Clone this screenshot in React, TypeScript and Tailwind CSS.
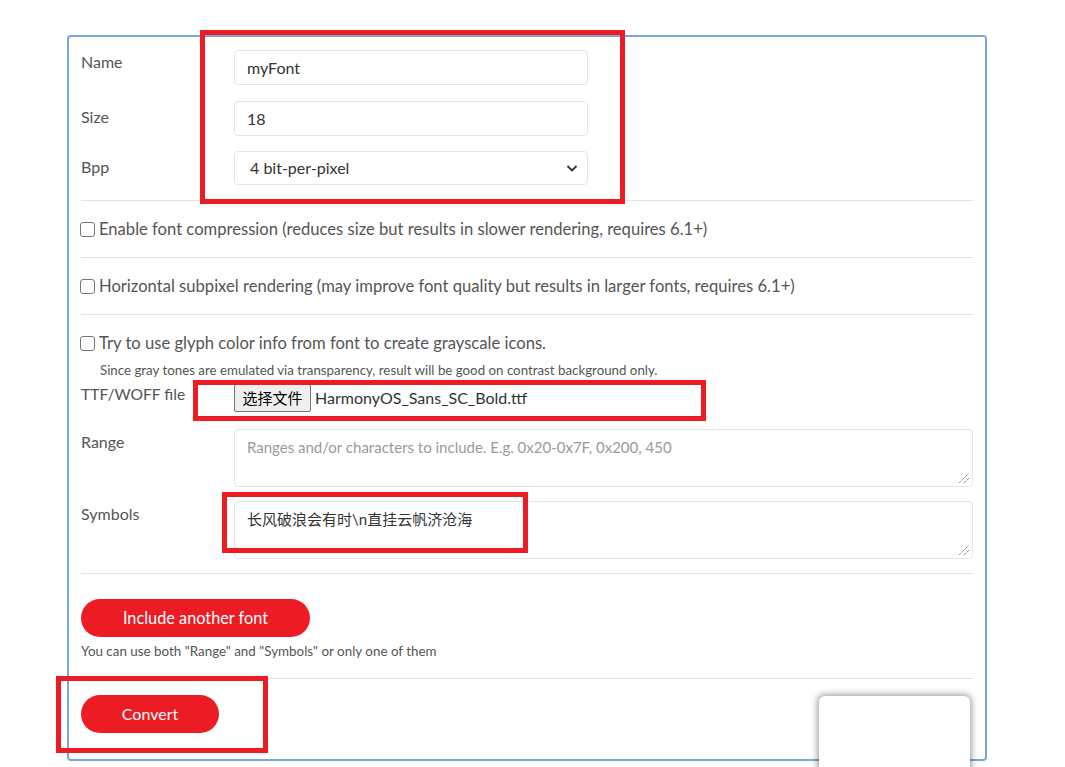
import React from "react";

const font = { fontFamily: "Lato, 'Noto Sans CJK SC', sans-serif" };

function ResizeHandle() {
  return (
    <svg className="absolute right-[2px] bottom-[2px]" width="12" height="12" viewBox="0 0 12 12">
      <line x1="1" y1="11" x2="11" y2="1" stroke="#555" strokeWidth="1" strokeDasharray="1 1" />
      <line x1="6" y1="11" x2="11" y2="6" stroke="#555" strokeWidth="1" strokeDasharray="1 1" />
    </svg>
  );
}

function Divider({ className = "" }: { className?: string }) {
  return <div className={"h-px bg-[#e3e3e3] " + className} />;
}

function Check({ label }: { label: string }) {
  return (
    <div className="flex items-center h-[24px]">
      <span className="w-[15px] h-[15px] border border-[#767676] rounded-[3px] ml-[-1px] mr-[4px] bg-white" />
      <span className="text-[16.6px] text-[#555] leading-[24px] whitespace-nowrap">{label}</span>
    </div>
  );
}

export default function App() {
  return (
    <div className="relative w-[1065px] h-[767px] bg-white overflow-hidden" style={font}>
      <div className="ml-[67px] mt-[35px] w-[920px] h-[726px] border-2 border-[#7aa7d8] rounded-[4px] px-[12px] pt-[13px]">
        {/* Name */}
        <div className="flex">
          <div className="w-[153px] text-[16px] leading-[24px] text-[#555]">Name</div>
          <div className="w-[354px] h-[35px] border border-[#e5e5e5] rounded-[4px] px-[12px] flex items-center text-[16px] text-[#333]">myFont</div>
        </div>
        <div className="flex mt-[16px]">
          <div className="w-[153px] text-[16px] leading-[24px] text-[#555] pt-[4px]">Size</div>
          <div className="w-[354px] h-[35px] border border-[#e5e5e5] rounded-[4px] px-[12px] flex items-center text-[16px] text-[#333]">18</div>
        </div>
        <div className="flex mt-[15px]">
          <div className="w-[153px] text-[16px] leading-[24px] text-[#555] pt-[4px]">Bpp</div>
          <div className="w-[354px] h-[34px] border border-[#e5e5e5] rounded-[4px] pl-[15px] pr-[8px] flex items-center justify-between text-[16px] text-[#333]">
            <span>4 bit-per-pixel</span>
            <svg width="14" height="14" viewBox="0 0 14 14">
              <path d="M2.5 5 L7 9.5 L11.5 5" fill="none" stroke="#333" strokeWidth="1.8" />
            </svg>
          </div>
        </div>
        <Divider className="mt-[15px]" />
        <div className="h-[56px] flex items-center">
          <Check label="Enable font compression (reduces size but results in slower rendering, requires 6.1+)" />
        </div>
        <Divider />
        <div className="h-[56px] flex items-center">
          <Check label="Horizontal subpixel rendering (may improve font quality but results in larger fonts, requires 6.1+)" />
        </div>
        <Divider />
        <div className="pt-[16px]">
          <Check label="Try to use glyph color info from font to create grayscale icons." />
        </div>
        <div className="pl-[19px] mt-[6px] text-[13.3px] leading-[18px] text-[#555] whitespace-nowrap">
          Since gray tones are emulated via transparency, result will be good on contrast background only.
        </div>
        {/* file */}
        <div className="flex mt-[3px]">
          <div className="w-[153px] text-[15.6px] leading-[24px] text-[#555]">TTF/WOFF file</div>
          <div className="flex items-center mt-[2px]">
            <span className="h-[28px] w-[77px] flex items-center justify-center bg-[#efefef] border border-[#767676] rounded-[2px] text-[15px] text-black">选择文件</span>
            <span className="ml-[4px] text-[16px] text-[#333]">HarmonyOS_Sans_SC_Bold.ttf</span>
          </div>
        </div>
        <div className="flex mt-[17px]">
          <div className="w-[153px] text-[16px] leading-[24px] text-[#555] pt-[1px]">Range</div>
          <div className="relative flex-1 h-[58px] border border-[#e5e5e5] rounded-[4px] px-[12px] pt-[5px] text-[15px] leading-[24px] text-[#9a9a9a]">
            Ranges and/or characters to include. E.g. 0x20-0x7F, 0x200, 450
            <ResizeHandle />
          </div>
        </div>
        <div className="flex mt-[14px]">
          <div className="w-[153px] text-[16px] leading-[24px] text-[#555] pt-[1px]">Symbols</div>
          <div className="relative flex-1 h-[58px] border border-[#e5e5e5] rounded-[4px] px-[12px] pt-[5px] text-[15px] leading-[24px] text-[#333]">
            长风破浪会有时\n直挂云帆济沧海
            <ResizeHandle />
          </div>
        </div>
        <Divider className="mt-[14px]" />
        <button className="mt-[25px] h-[38px] w-[229px] rounded-full bg-[#ed1c24] text-white text-[16.3px]">Include another font</button>
        <div className="mt-[6px] text-[13.4px] leading-[16px] text-[#555]">You can use both "Range" and "Symbols" or only one of them</div>
        <Divider className="mt-[19px]" />
        <button className="mt-[16px] h-[38px] w-[138px] rounded-full bg-[#ed1c24] text-white text-[16px]">Convert</button>
      </div>

      {/* floating white box */}
      <div className="absolute left-[819px] top-[696px] w-[151px] h-[90px] bg-white rounded-[6px] shadow-[0_0_6px_2px_rgba(0,0,0,0.35)]" />

      {/* red annotation boxes */}
      <div className="absolute left-[200px] top-[30px] w-[425px] h-[174px] border-[5px] border-[#ed1c24]" />
      <div className="absolute left-[193px] top-[380px] w-[513px] h-[41px] border-[5px] border-[#ed1c24]" />
      <div className="absolute left-[222px] top-[492px] w-[306px] h-[61px] border-[5px] border-[#ed1c24]" />
      <div className="absolute left-[56px] top-[676px] w-[212px] h-[77px] border-[5px] border-[#ed1c24]" />
    </div>
  );
}
